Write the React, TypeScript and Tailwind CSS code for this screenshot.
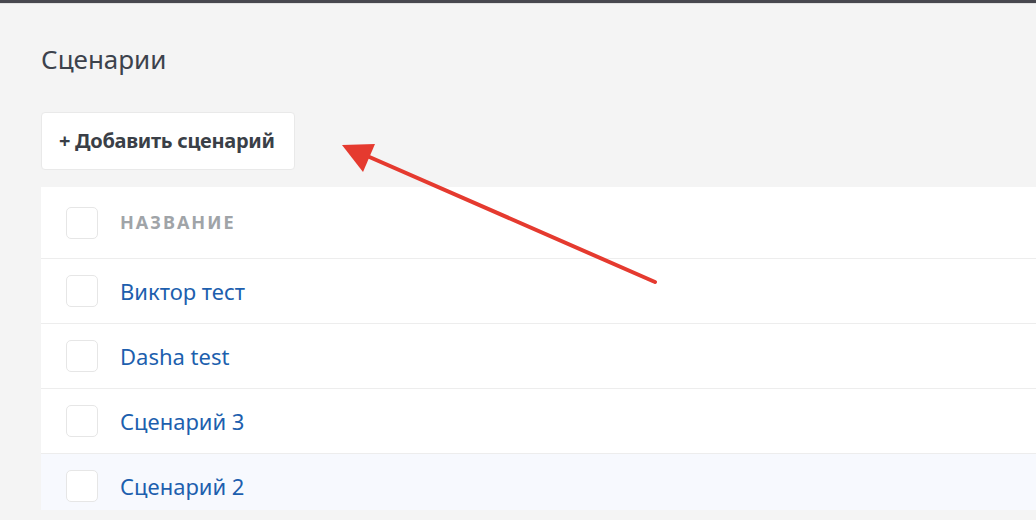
import React from "react";

const rows = [
  { name: "Виктор тест", hl: false },
  { name: "Dasha test", hl: false },
  { name: "Сценарий 3", hl: false },
  { name: "Сценарий 2", hl: true },
];

function Checkbox() {
  return <div className="w-[32px] h-[32px] shrink-0 rounded-[5px] border border-[#e6e6e6] bg-white" />;
}

export default function App() {
  return (
    <div className="relative w-[1036px] h-[520px] overflow-hidden bg-[#f4f4f4] font-['Noto_Sans',sans-serif]">
      <div className="h-[3px] bg-[#48484f]" />
      <div className="h-px bg-[#e2e2e2]" />
      <div className="h-[506px] overflow-hidden pl-[41px]">
        <h1 className="pt-[38px] text-[26px] leading-[34px] text-[#3c424c] font-normal">Сценарии</h1>
        <div className="mt-[36px] flex">
          <button className="h-[58px] w-[254px] rounded-[4px] border border-[#e9e9e9] bg-white px-[17px] text-left text-[20px] font-bold text-[#3a3f47] tracking-[-0.3px] whitespace-nowrap">
            + Добавить сценарий
          </button>
        </div>
        <div className="mt-[17px] bg-white">
          <div className="flex h-[72px] items-center border-b border-[#ededed] pl-[25px]">
            <Checkbox />
            <span className="ml-[22px] text-[18px] font-bold uppercase tracking-[2px] text-[#a0a4a8]">Название</span>
          </div>
          {rows.map((r) => (
            <div
              key={r.name}
              className={`flex h-[65px] items-center border-b border-[#ededed] pl-[25px] ${r.hl ? "bg-[#f7f9fe]" : "bg-white"}`}
            >
              <Checkbox />
              <span className="ml-[22px] text-[22px] text-[#1d5fae]">{r.name}</span>
            </div>
          ))}
        </div>
      </div>
      <svg className="pointer-events-none absolute left-0 top-0" width="1036" height="520">
        <line x1="655" y1="282" x2="358" y2="152" stroke="#e53a2f" strokeWidth="4" strokeLinecap="round" />
        <polygon points="342,145 375,144 363,172" fill="#e53a2f" />
      </svg>
    </div>
  );
}
